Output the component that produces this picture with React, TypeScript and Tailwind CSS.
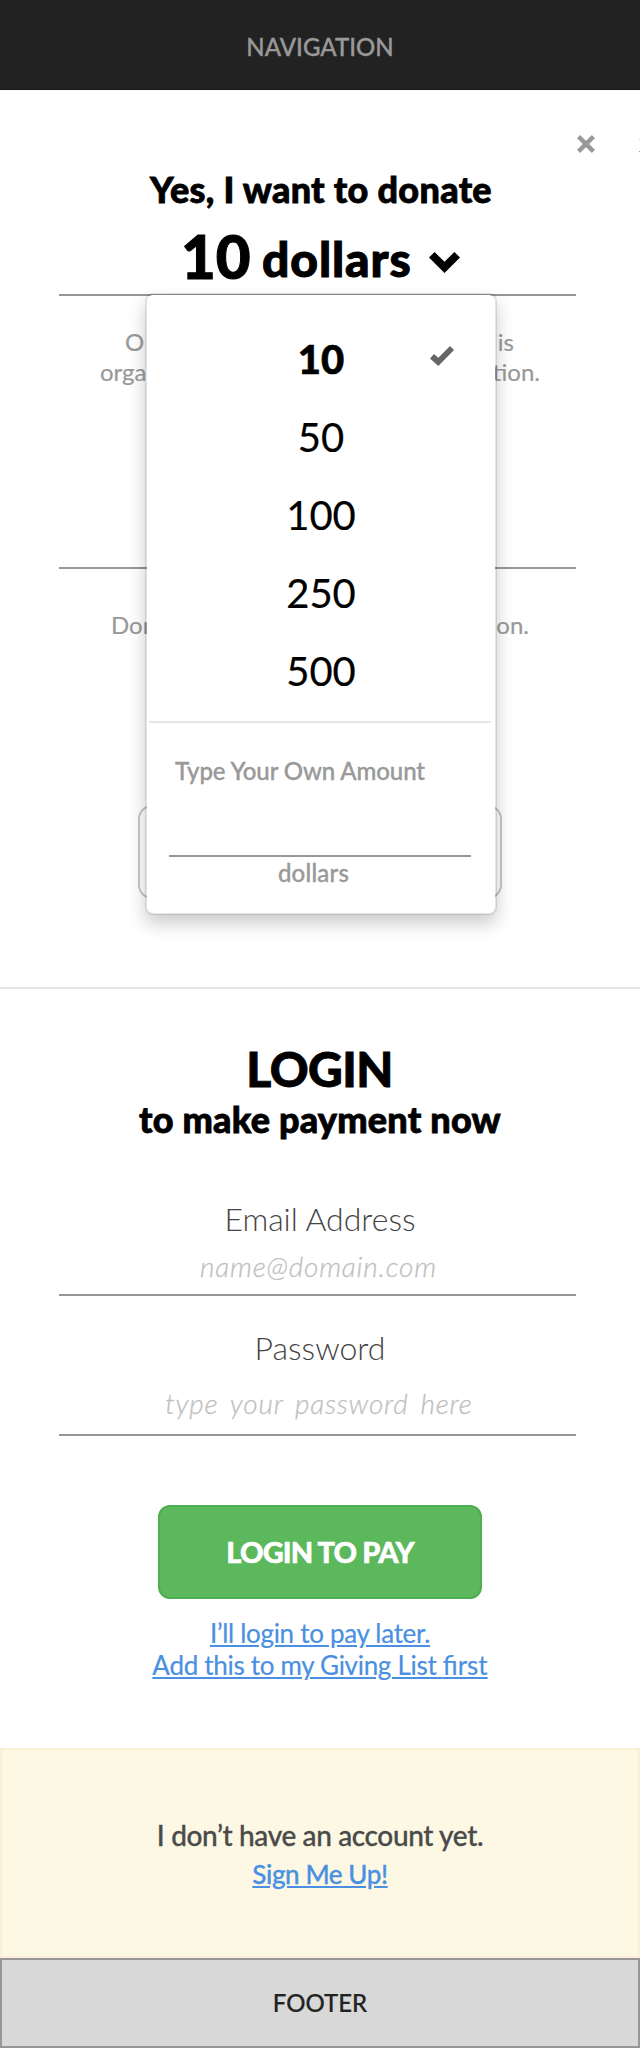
import React from "react";

const amounts = ["10", "50", "100", "250", "500"];

function CheckIcon() {
  return (
    <svg className="block h-5 w-6" viewBox="0 0 24 20" fill="#666666">
      <path d="M0 12.5 L4 8 L8.3 11.8 L20 0 L24 4 L8.3 20 Z" />
    </svg>
  );
}

function ChevronIcon() {
  return (
    <svg className="mt-[40px] block h-[21px] w-[31px]" viewBox="0 0 31 21" fill="#000000">
      <path d="M0 5.5 L5.6 0 L15.5 9.8 L25.4 0 L31 5.5 L15.5 21 Z" />
    </svg>
  );
}

function CloseIcon() {
  return (
    <svg className="block h-[18px] w-[18px]" viewBox="0 0 18 18" stroke="#999999" strokeWidth="4.4">
      <path d="M1.6 1.6 L16.4 16.4 M16.4 1.6 L1.6 16.4" />
    </svg>
  );
}

function AmountMenu() {
  return (
    <div className="absolute left-[145px] top-[203px] h-[622px] w-[352px] rounded-[8px] border-2 border-black/10 bg-white bg-clip-padding shadow-[0_9px_18px_rgba(0,0,0,0.2)]">
      <ul className="h-[426px] pt-[25px] text-center text-[40px] leading-[78px] text-black">
        {amounts.map((amount, i) => (
          <li
            key={amount}
            className={
              i === 0
                ? "relative h-[78px] font-black [-webkit-text-stroke:0.6px]"
                : "h-[78px] [-webkit-text-stroke:0.2px]"
            }
          >
            {amount}
            {i === 0 && (
              <span className="absolute left-[283px] top-[26px]">
                <CheckIcon />
              </span>
            )}
          </li>
        ))}
      </ul>
      <div className="ml-[2px] mr-[4px] h-[2px] bg-[#e5e5e5]" />
      <div className="pl-[28px] pt-[31px] text-left text-[24px] leading-[34px] text-[#999999] [-webkit-text-stroke:0.35px]">
        <span className="font-medium tracking-[-0.1px]">Type Your Own Amount</span>
      </div>
      <div className="ml-[22px] mt-[67px] h-[2px] w-[302px] bg-[#979797]" />
      <div className="w-[333px] text-center text-[24px] font-medium leading-[32px] tracking-[0.2px] text-[#999999] [-webkit-text-stroke:0.35px]">
        dollars
      </div>
    </div>
  );
}

export default function App() {
  return (
    <div className="h-[2048px] w-[640px] overflow-hidden bg-white text-center font-[Lato,sans-serif]">
      <header className="h-[90px] border-b border-[#1b171b] bg-[#222222] pt-[32px] text-[24px] font-medium leading-[30px] text-[#999999] [-webkit-text-stroke:0.35px]">
        NAVIGATION
      </header>

      <main className="relative h-[899px] border-b-2 border-[#e5e5e5]">
        <div className="absolute left-[577px] top-[45px]">
          <CloseIcon />
        </div>
        <div className="absolute left-[639px] top-[49px] h-[13px] w-px border-y border-b-[#999999] border-t-[#cccccc]" />
        <h1 className="h-[122px] pl-[2px] pt-[79px] text-[36px] font-black leading-[40px] tracking-[0.3px] text-black [-webkit-text-stroke:0.8px]">
          Yes, I want to donate
        </h1>
        <div className="ml-[181px] flex h-[82px] items-start font-black text-black">
          <span className="mt-[2px] w-[81px] text-left text-[60px] leading-[84px] [-webkit-text-stroke:1px]">10</span>
          <span className="mt-[6px] w-[167px] text-left text-[48px] leading-[82px] tracking-[0.9px] [-webkit-text-stroke:1px]">
            dollars
          </span>
          <ChevronIcon />
        </div>
        <div className="ml-[59px] h-[2px] w-[517px] bg-[#979797]" />
        <div className="mt-[31px] text-[24px] leading-[30px] text-[#999999] [-webkit-text-stroke:0.2px]">
          <div className="flex justify-between pl-[125px] pr-[126px]">
            <span>O</span>
            <span>is</span>
          </div>
          <div className="flex justify-between pl-[100px] pr-[100px]">
            <span>orga</span>
            <span>tion.</span>
          </div>
        </div>
        <div className="ml-[59px] mt-[180px] h-[2px] w-[517px] bg-[#979797]" />
        <div className="mt-[41px] flex justify-between pl-[111px] pr-[111px] text-[24px] leading-[30px] text-[#999999] [-webkit-text-stroke:0.2px]">
          <span>Don</span>
          <span>on.</span>
        </div>
        <div className="mx-auto mt-[165px] h-[94px] w-[364px] rounded-[14px] border-2 border-[#c8c8c8] bg-white" />
        <AmountMenu />
      </main>

      <section className="h-[759px]">
        <h2 className="pr-[1px] pt-[51px] text-[48px] font-black leading-[58px] tracking-[-0.6px] text-black [-webkit-text-stroke:0.8px]">
          LOGIN
        </h2>
        <h3 className="text-[36px] font-black leading-[43px] tracking-[0.22px] text-black [-webkit-text-stroke:0.8px]">
          to make payment now
        </h3>
        <label className="mt-[56px] block text-[32px] font-light leading-[44px] text-[#444444]">Email Address</label>
        <p className="pr-[3px] text-[28px] font-light italic leading-[50px] tracking-[0.8px] text-[#bfc1bf] [-webkit-text-stroke:0.3px]">
          name@domain.com
        </p>
        <div className="ml-[59px] mt-[3px] h-[2px] w-[517px] bg-[#979797]" />
        <label className="mt-[30px] block text-[32px] font-light leading-[44px] text-[#444444]">Password</label>
        <p className="mt-[9px] pr-[2px] text-[28px] font-light italic leading-[48px] tracking-[0.8px] text-[#bfc1bf] [-webkit-text-stroke:0.3px] [word-spacing:4px]">
          type your password here
        </p>
        <div className="ml-[59px] mt-[7px] h-[2px] w-[517px] bg-[#979797]" />
        <button className="mx-auto mt-[69px] block h-[94px] w-[324px] rounded-[12px] border-2 border-[#4cae4c] bg-[#5cb85c] text-[29px] font-black leading-[90px] tracking-[-0.85px] text-white [-webkit-text-stroke:0.5px]">
          LOGIN TO PAY
        </button>
        <div className="mt-[18px] text-[26px] leading-[32px] tracking-[-0.3px] text-[#4a90e2] [-webkit-text-stroke:0.2px]">
          <a className="underline">I’ll login to pay later.</a>
          <br />
          <a className="underline">
            Add this to my Giving List <span className="tracking-normal">first</span>
          </a>
        </div>
      </section>

      <section className="h-[210px] border-2 border-[#fcefd6] bg-[#fcf8e3] pt-[67px]">
        <p className="text-[28px] font-medium leading-[36px] tracking-[-0.37px] text-[#4a4a4a] [-webkit-text-stroke:0.3px]">
          I don’t have an account yet.
        </p>
        <p className="pt-[1px] text-[26px] font-medium leading-[40px] tracking-[-0.4px] text-[#4a90e2] [-webkit-text-stroke:0.3px]">
          <a className="underline">Sign Me Up!</a>
        </p>
      </section>
      <footer className="h-[90px] border-2 border-[#979797] bg-[#d8d8d8] pt-[28px] text-[24px] font-medium leading-[30px] text-[#222222] [-webkit-text-stroke:0.2px]">
        FOOTER
      </footer>
    </div>
  );
}
